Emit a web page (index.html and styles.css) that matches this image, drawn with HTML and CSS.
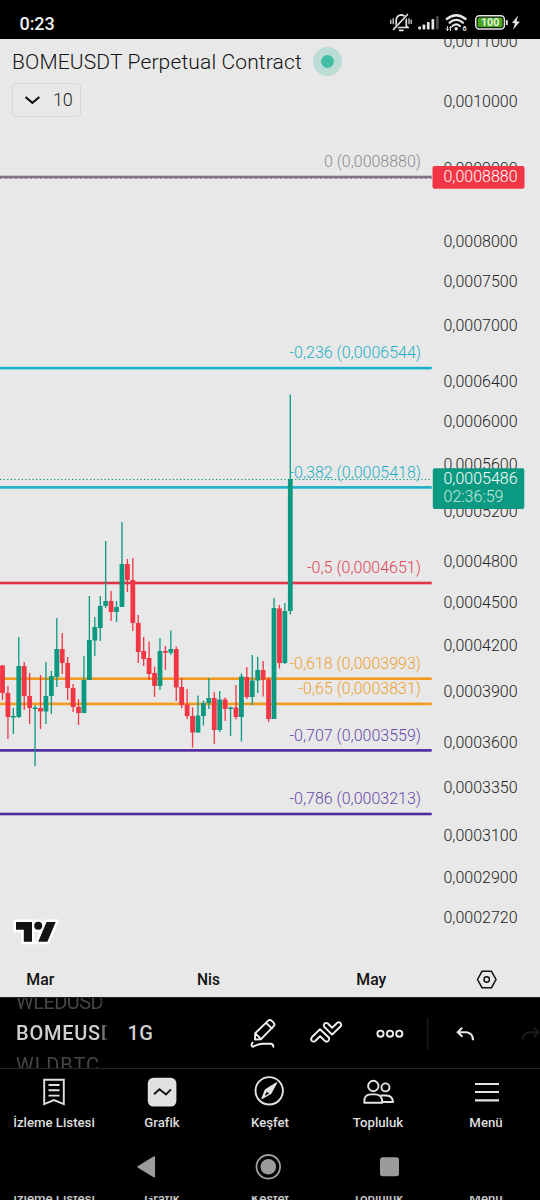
FILE: index.html
```html
<!DOCTYPE html>
<html lang="tr">
<head>
<meta charset="utf-8">
<title>BOMEUSDT Perpetual Contract</title>
<link rel="stylesheet" href="styles.css">
</head>
<body>
<div class="phone">
  <header class="status">
    <span class="clock">0:23</span>
    <svg class="status-icons" width="140" height="39" viewBox="385 0 140 39">
      <g fill="none" stroke="#e6e6e6" stroke-width="1.7" stroke-linecap="round">
        <path d="M394.5 27.5h13M396.200 26.500v-6q0-5.200 4.800-5.700 5.300.5 5.300 5.700v6l1.800 1M399.500 30.300h3.500"/>
        <path d="M394.500 29L408.500 14" stroke="#000" stroke-width="3"/>
        <path d="M393.500 29.500L407.500 14.500"/>
        <path d="M390.800 20v3.500M393.200 18.700v5M409 18.700v5M411.200 20v3.500" stroke-width="1.200"/>
      </g>
      <g fill="#e6e6e6">
        <rect x="418.300" y="26.500" width="2.700" height="3" rx=".8"/>
        <rect x="422.600" y="24.500" width="2.700" height="5" rx=".8"/>
        <rect x="426.900" y="22" width="2.700" height="7.500" rx=".8"/>
        <rect x="431.500" y="19" width="2.700" height="10.500" rx=".8"/>
        <rect x="436" y="16" width="2.700" height="13.500" rx=".8" fill="#484848"/>
      </g>
      <g fill="none" stroke="#e6e6e6" stroke-width="2.300" stroke-linecap="round">
        <path d="M446.800 19q9.400-7.600 18.800 0M449.600 22.700q6.600-5.600 13.200 0M452.500 26q3.700-3.200 7.400 0"/>
      </g>
      <circle cx="456.200" cy="28.700" r="1.700" fill="#e6e6e6"/>
      <path d="M447.500 26v4.500M446 28.500l1.500 2 1.500-2M450.500 31v-4.500M449.300 28l1.200-1.500 1.200 1.500" stroke="#e6e6e6" stroke-width=".9" fill="none"/>
      <text class="wifi-gen" x="462.500" y="31">6</text>
      <rect x="475.800" y="15.700" width="28.600" height="13.300" rx="3.500" fill="none" stroke="#e6e6e6" stroke-width="1.500"/>
      <rect x="477.600" y="17.500" width="25" height="9.700" rx="1.500" fill="#45a51c"/>
      <rect x="506" y="20" width="1.800" height="5" rx=".6" fill="#e6e6e6"/>
      <text class="battery" x="490.200" y="26.300" text-anchor="middle" textLength="18.500" lengthAdjust="spacingAndGlyphs">100</text>
      <path d="M518 15.500l-6 7.500 3 .2-2 6.500 6.800-8-3.300-.4z" fill="#e6e6e6"/>
    </svg>
  </header>

  <main class="chart">
    <svg id="plot" class="plot" width="540" height="958" viewBox="0 39 540 958"></svg>
    <div class="legend">
      <div class="title-row">
        <h1 class="title">BOMEUSDT Perpetual Contract</h1>
        <span class="market-dot"></span>
      </div>
      <div class="indicators">
        <svg width="18" height="12" viewBox="0 0 18 12"><path d="M1.500 3l6.900 5.800L15.400 3" fill="none" stroke="#111" stroke-width="2.100"/></svg>
        <span>10</span>
      </div>
    </div>
  </main>

  <div class="toolbar">
    <div class="symbols">
      <div class="symbol dim">WLEDUSD</div>
      <div class="symbol current">BOMEUSDT</div>
      <div class="symbol dim last">WLDBTC</div>
    </div>
    <div class="interval">1G</div>
    <svg class="tools" width="320" height="70" viewBox="220 998 320 70">
      <g fill="none" stroke="#f0f0f0" stroke-width="1.900" stroke-linejoin="round" stroke-linecap="round">
        <path d="M255 1039.500l.2-6.200 13-12.700q1.700-1.500 3.500.2l1.800 1.800q1.800 1.800.2 3.500l-12.900 13.200zM255.300 1033.300l5.700 5.900M266.200 1022.800l5.700 5.800"/>
        <path d="M252.600 1042.500q-2.300 3.300.3 4.300 4.600-2.500 9.400-3 4.500-.1 8.800 0 2.200.5 2.300 3"/>
        <path d="M312 1037l8-7.800 9 8.500q.7 1.800-.6 3.200-1.500 1.400-3.300.2l-5-4.900-5.200 5q-1.700 1-3.100-.4-1.400-1.800.2-3.800z"/>
        <path d="M332.100 1034.600l-7.900-7.800q-1.100-1.600.2-3.100 1.400-1.400 3.200-.4l4.500 4.400 5.200-5q1.700-1.100 3.200.3 1.300 1.600.2 3.300z"/>
        <circle cx="380.500" cy="1033.700" r="3.100"/><circle cx="390" cy="1033.700" r="3.100"/><circle cx="399.300" cy="1033.700" r="3.100"/>
      </g>
      <path d="M427.800 1017.500v32" stroke="#252525"/>
      <path d="M462.200 1027.600l-4.500 4.700 4.800 4.500M458 1032.300h8.500q6.500.8 6.500 8" fill="none" stroke="#e8e8e8" stroke-width="2"/>
      <path d="M534 1027.600l4.500 4.700-4.500 4.500M538.500 1032.300h-8.500q-7.500.8-7.500 8" fill="none" stroke="#1b1b1b" stroke-width="2"/>
    </svg>
  </div>

  <nav class="tabs">
    <div class="tab">
      <svg width="36" height="36" viewBox="36 1074 36 36"><g fill="none" stroke="#e0e0e0" stroke-width="1.900"><path d="M44.200 1079.800h19.600v24.300l-9.800-4-9.800 4z"/><path d="M48.500 1085h11M48.500 1090.300h11M48.500 1095.600h11"/></g></svg>
      <span>İzleme Listesi</span>
    </div>
    <div class="tab">
      <svg width="36" height="36" viewBox="144 1074 36 36"><rect x="147.800" y="1077.800" width="28.600" height="28.800" rx="5.500" fill="#e0e0e0"/><path d="M154 1094.300l5.500-5.100 6.500 5.200 5-5" fill="none" stroke="#111" stroke-width="1.900"/></svg>
      <span>Grafik</span>
    </div>
    <div class="tab">
      <svg width="36" height="36" viewBox="252 1074 36 36"><circle cx="269.200" cy="1090.800" r="13.700" fill="none" stroke="#e4e4e4" stroke-width="1.900"/><path d="M262 1098.500l3.400-8.700 11.300-7-6 10.800zM266.500 1090.500l3.600 3.200-6.600 3.500z" fill="#e4e4e4" fill-rule="evenodd" stroke="#e4e4e4" stroke-width="1.200" stroke-linejoin="round"/></svg>
      <span>Keşfet</span>
    </div>
    <div class="tab">
      <svg width="36" height="36" viewBox="360 1074 36 36"><g fill="none" stroke="#e4e4e4" stroke-width="1.900" stroke-linejoin="round"><circle cx="373.300" cy="1086" r="5.200"/><circle cx="385.500" cy="1087.400" r="4"/><path d="M364.300 1102.700q-.8-8.300 6.700-8.300h4.500q7 .3 6.800 8.300z"/><path d="M380.500 1095.500h6q6 .3 6.500 6.500h-10"/></g></svg>
      <span>Topluluk</span>
    </div>
    <div class="tab">
      <svg width="36" height="36" viewBox="468 1074 36 36"><path d="M475 1084h24M475 1092h24M475 1100.300h24" stroke="#e4e4e4" stroke-width="2.200"/></svg>
      <span>Menü</span>
    </div>
  </nav>

  <div class="system">
    <svg width="540" height="57" viewBox="0 1139 540 57">
      <path d="M138 1166.800l16.300-9.800v19.800z" fill="#9b9b9b" stroke="#9b9b9b" stroke-width="1.500" stroke-linejoin="round"/>
      <circle cx="268.300" cy="1166.800" r="11.800" fill="none" stroke="#a0a0a0" stroke-width="1.800"/>
      <circle cx="268.300" cy="1166.800" r="7.800" fill="#9b9b9b"/>
      <rect x="380" y="1157.300" width="19" height="19" rx="2.800" fill="#9b9b9b"/>
    </svg>
  </div>

  <div class="tabs-echo">
    <span>İzleme Listesi</span><span>Grafik</span><span>Keşfet</span><span>Topluluk</span><span>Menü</span>
  </div>
</div>
<script src="chart.js"></script>
</body>
</html>
```
FILE: styles.css
```css
* { box-sizing: border-box; }
body { margin: 0; background: #000; font-family: Roboto, "Noto Sans", sans-serif; }
svg { display: block; flex: none; }
.phone { width: 540px; height: 1200px; overflow: hidden; display: flex; flex-direction: column; background: #000; }

.status { height: 39px; flex: none; display: flex; justify-content: space-between; padding: 0 15px 0 19.500px; }
.clock { color: #f0f0f0; font-size: 18px; font-weight: 500; line-height: 47px; letter-spacing: -.1px; }
.wifi-gen { font-size: 7px; font-weight: 700; fill: #e6e6e6; }
.battery { font-size: 10.500px; font-weight: 700; fill: #e8f5e0; }

.chart { height: 958px; flex: none; display: grid; background: #e8e8e8; }
.plot, .legend { grid-area: 1 / 1; }
.legend { padding: 8px 0 0 12px; justify-self: start; align-self: start; }
.title-row { display: flex; align-items: center; height: 29px; }
.title { margin: 0; width: 289.500px; font-size: 21px; font-weight: 300; line-height: 29px; letter-spacing: .14px; padding-top: 1px; color: #131313; white-space: nowrap; }
.market-dot { width: 29px; height: 29px; margin-left: 11.500px; border-radius: 50%; border: 8px solid #bcdcd6; background: #40bfa5; }
.indicators { display: flex; align-items: center; gap: 11px; width: 69px; height: 34px; margin-top: 7px; padding: 0 0 1px 11px; border: 1px solid #d6d6d6; border-radius: 4px; font-size: 18px; font-weight: 300; letter-spacing: -.2px; color: #222; }

.axis { font-size: 16px; font-weight: 350; fill: #222; }
.axis.month { font-weight: 500; fill: #111; }
.tag-text { font-size: 16px; font-weight: 350; fill: #fff; }
.tag-time { font-size: 16px; font-weight: 350; fill: #c5e8df; }
.fib { font-size: 16px; font-weight: 350; }

.toolbar { height: 72px; flex: none; display: flex; border-top: 1px solid #222; border-bottom: 1px solid #242424; }
.symbols { width: 91px; height: 70px; margin-left: 16px; overflow: hidden; -webkit-mask-image: linear-gradient(90deg, #000 84px, transparent 92px); mask-image: linear-gradient(90deg, #000 84px, transparent 92px); }
.symbol { height: 31.500px; line-height: 31.500px; font-size: 20px; white-space: nowrap; }
.symbol:first-child { margin-top: -11.500px; }
.symbol.current { font-weight: 500; letter-spacing: .75px; color: #cfcfcf; }
.symbol.dim { color: #454545; letter-spacing: -.55px; }
.symbol.last { letter-spacing: .9px; }
.interval { width: 113px; padding-left: 20.500px; font-size: 20px; font-weight: 500; line-height: 70px; letter-spacing: .5px; color: #cfcfcf; }

.tabs { height: 70px; flex: none; display: grid; grid-template-columns: repeat(5, 108px); padding-top: 5px; }
.tab { display: flex; flex-direction: column; align-items: center; }
.tab span { font-size: 13.200px; font-weight: 500; line-height: 26px; color: #dedede; white-space: nowrap; }
.system { height: 57px; flex: none; }
.tabs-echo { height: 4px; flex: none; overflow: hidden; display: grid; grid-template-columns: repeat(5, 108px); justify-items: center; color: #c8c8c8; font-size: 13.200px; font-weight: 500; line-height: 14px; }
.tabs-echo span { margin-top: -4px; white-space: nowrap; }
```
FILE: chart.js
```js
const UP = '#0b9981';
const DOWN = '#f23645';
const STEP = 5.43;

// [direction, wick top, body top, body bottom, wick bottom]
const candles = [
  [0, 665, 665.5, 693, 700], [0, 686, 693, 717, 739], [1, 708, 716, 717.5, 734],
  [1, 637, 666, 717, 718], [0, 662, 666, 696, 710], [0, 673, 696, 708, 724],
  [1, 705, 707.5, 709, 766], [0, 675, 708, 711.5, 729], [1, 662, 696, 711.5, 724],
  [1, 671, 676, 696, 714], [1, 618, 649, 677, 687], [0, 633, 649, 663, 674],
  [0, 657, 663, 688, 700], [0, 684, 688, 707, 712], [0, 699, 707, 713, 725],
  [1, 656, 680, 713, 713], [1, 596, 640, 680, 680], [1, 617, 627, 640.5, 656],
  [1, 596, 606, 628, 641], [1, 541, 601, 606, 608], [0, 591, 601, 612, 621],
  [1, 601, 607, 612, 622], [1, 522, 564, 607, 607], [0, 559, 564, 580, 592],
  [0, 558, 580, 623, 631], [0, 615, 623, 652, 663], [0, 637, 651, 659, 666],
  [0, 641.5, 658, 674, 680], [0, 666.7, 673, 686, 697], [1, 638, 651, 686, 690],
  [0, 646, 651, 652.7, 670], [1, 630.5, 649, 652.7, 655], [0, 646.5, 649, 687.5, 701],
  [0, 678, 687, 705, 708], [0, 689, 704.5, 716, 719], [0, 707.5, 716, 732.5, 747.5],
  [1, 695.5, 715.5, 732.5, 732.5], [1, 700.5, 703, 716, 725.5], [1, 678, 698, 703, 709],
  [0, 692, 698, 730, 744], [1, 691, 699.5, 730, 732], [0, 697.5, 699.5, 709, 721],
  [1, 706.5, 707.5, 709, 736], [0, 685, 707.5, 717, 719.5], [1, 673.5, 676.5, 717, 741.5],
  [0, 667, 677, 697, 699], [1, 655, 680.5, 697, 705], [1, 657, 670, 680.5, 693],
  [0, 661, 670, 679.5, 696.5], [0, 677, 679.5, 719, 722], [1, 598, 608, 719, 719],
  [0, 605, 608.5, 663, 668.5], [1, 603, 611, 663, 664], [1, 394.5, 479, 611, 614.5]
];

// [label, line y, line colour, text colour, left edge of label]
const levels = [
  ['0 (0,0008880)', 177, '#7c7684', '#8b8b8f', 324],
  ['-0,236 (0,0006544)', 368.1, '#18b1c8', '#1fb0c5', 289.5],
  ['-0,382 (0,0005418)', 487.4, '#18b1c8', '#1fb0c5', 289.5],
  ['-0,5 (0,0004651)', 583, '#dd3545', '#e04456', 307],
  ['-0,618 (0,0003993)', 678.7, '#f39a1d', '#efa02f', 289.5],
  ['-0,65 (0,0003831)', 703.9, '#f39a1d', '#efa02f', 298.5],
  ['-0,707 (0,0003559)', 750.4, '#4f27a0', '#6748ab', 289.5],
  ['-0,786 (0,0003213)', 814, '#4f27a0', '#6748ab', 289.5]
];

const prices = [
  ['0,0011000', 41.5], ['0,0010000', 101], ['0,0009000', 168], ['0,0008000', 241],
  ['0,0007500', 281.5], ['0,0007000', 325], ['0,0006400', 381], ['0,0006000', 421.5],
  ['0,0005600', 464.5], ['0,0005200', 511.5], ['0,0004800', 561.5], ['0,0004500', 602],
  ['0,0004200', 645], ['0,0003900', 691.3], ['0,0003600', 742], ['0,0003350', 787],
  ['0,0003100', 835.5], ['0,0002900', 877.5], ['0,0002720', 917.5]
];

const text = (cls, x, y, width, str, extra = '') =>
  `<text class="${cls}" x="${x}" y="${y}" textLength="${width}" lengthAdjust="spacingAndGlyphs" ${extra}>${str}</text>`;

let out = '';
for (const [, y, color] of levels) {
  out += `<rect x="0" y="${y - 1.3}" width="431.700" height="2.600" fill="${color}"/>`;
}
out += '<path d="M0 178.500H432" stroke="#a8506c" stroke-width="1" stroke-dasharray="2 3" opacity=".6"/>';
out += `<path d="M0 479.500H432" stroke="${UP}" stroke-width="1.200" stroke-dasharray="1.300 2.300"/>`;

candles.forEach(([up, high, top, bottom, low], i) => {
  const x = 2.5 + i * STEP;
  const color = up ? UP : DOWN;
  out += `<rect x="${x - 0.65}" y="${high}" width="1.300" height="${low - high}" fill="${color}"/>`;
  out += `<rect x="${x - 2.4}" y="${top}" width="4.800" height="${bottom - top}" fill="${color}"/>`;
});

for (const [label, y, , color, x] of levels) {
  out += text('fib', x, y - 9.7, 421 - x, label, `fill="${color}"`);
}
for (const [label, y] of prices) {
  out += text('axis', 443.5, y + 5.5, 74, label);
}

out += `<rect x="432.500" y="166" width="92" height="22.800" rx="2" fill="${DOWN}"/>`;
out += text('tag-text', 443.5, 182, 74, '0,0008880');
out += `<rect x="432.800" y="468.300" width="91.500" height="40.700" rx="2" fill="${UP}"/>`;
out += text('tag-text', 443.5, 483.7, 74, '0,0005486');
out += text('tag-time', 443.5, 502.3, 60, '02:36:59');

out += text('axis month', 26.3, 985, 28, 'Mar');
out += text('axis month', 197, 985, 23, 'Nis');
out += text('axis month', 356.3, 985, 30, 'May');

out += '<g fill="none" stroke="#111" stroke-width="1.500"><path d="M482 971.300h9.500l4.500 8.200-4.500 8.200H482l-4.500-8.200z"/><circle cx="486.700" cy="979.500" r="2.700"/></g>';

// TradingView mark with its white halo
const mark = '<path d="M16 922h16v19.700h-8.200v-12H16z"/><circle cx="38.200" cy="925.800" r="4"/><path d="M46.500 922h9.200l-8.300 19.700h-9.200z"/>';
out += `<g fill="#fff" stroke="#fff" stroke-width="5">${mark}</g><g fill="#141414">${mark}</g>`;

document.getElementById('plot').innerHTML = out;
```
